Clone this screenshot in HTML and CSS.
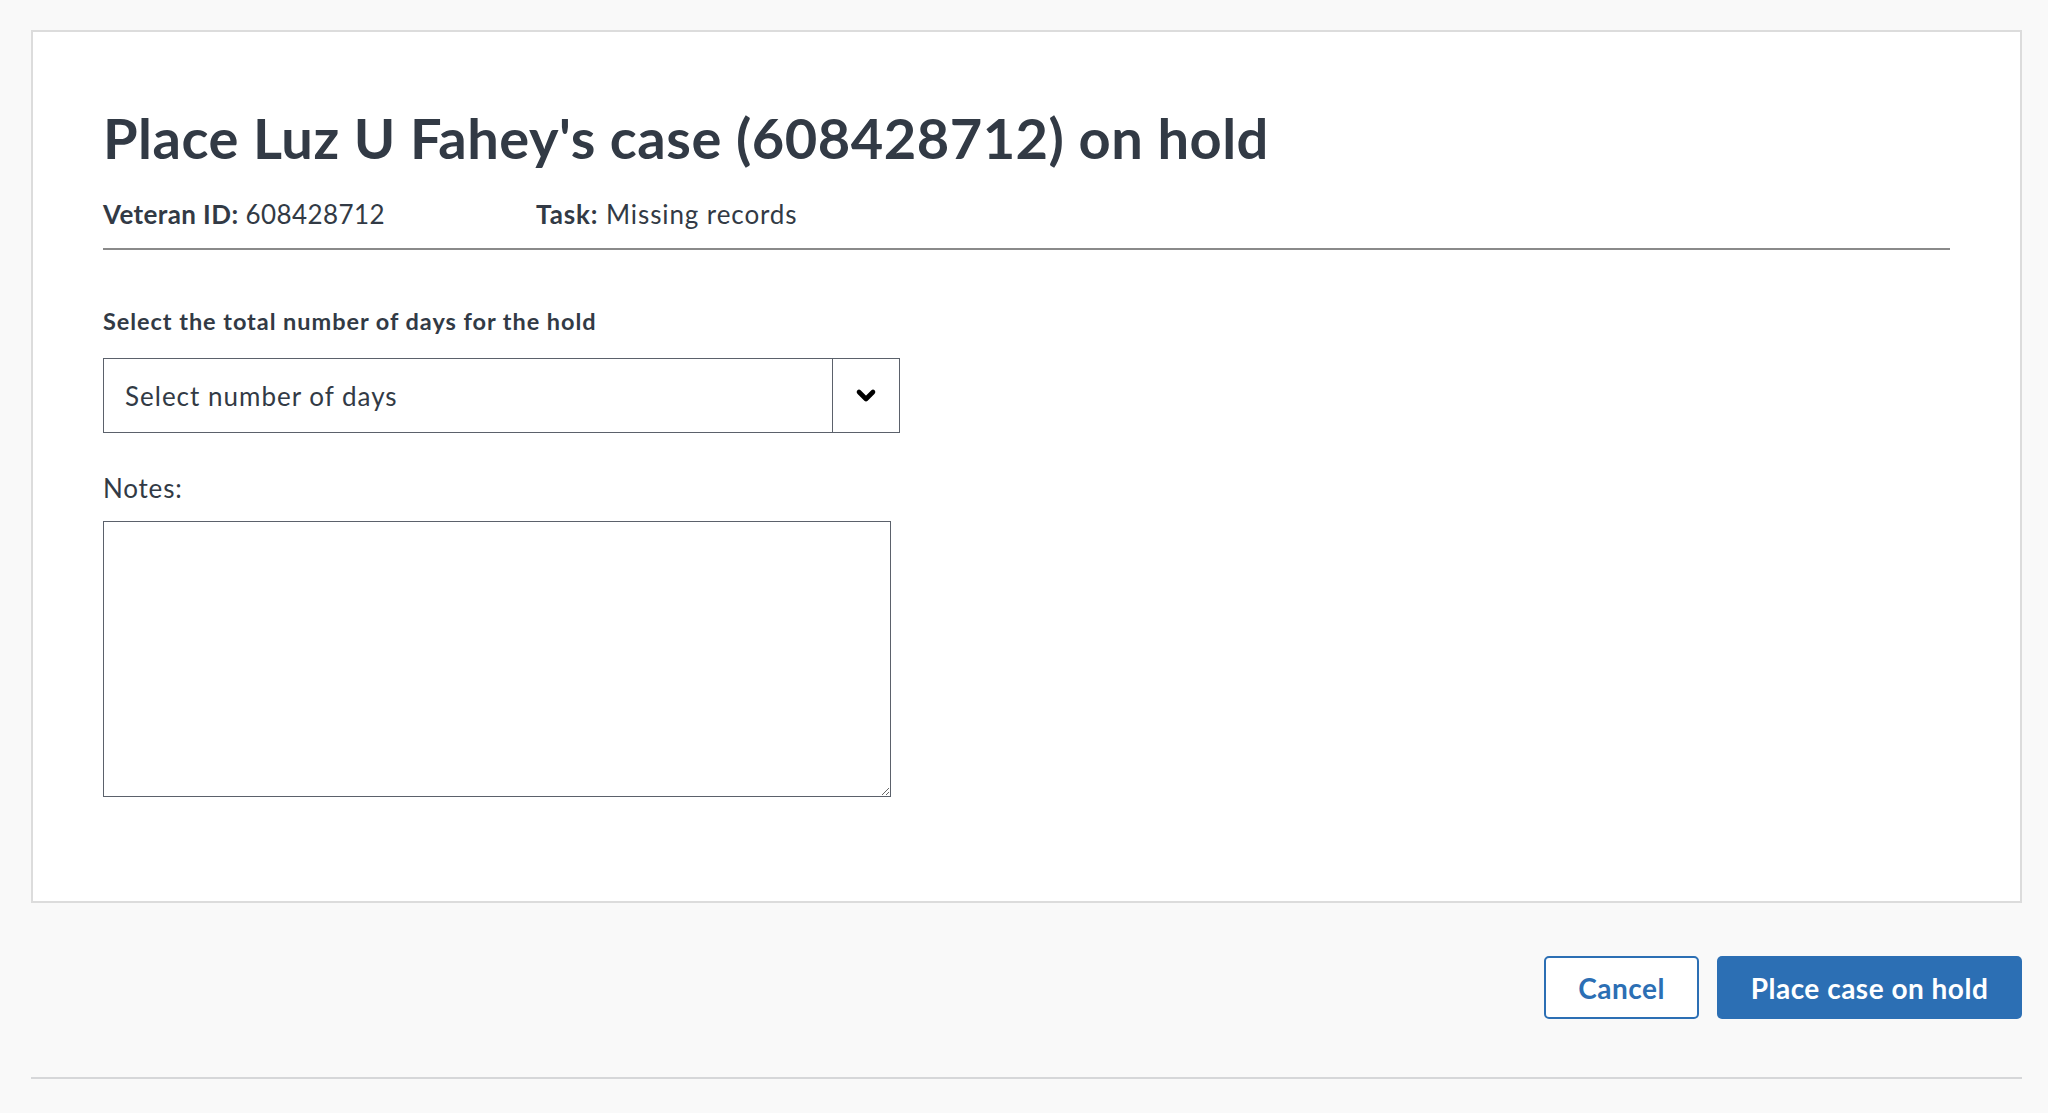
FILE: index.html
```html
<!DOCTYPE html>
<html lang="en">
<head>
<meta charset="UTF-8">
<title>Place case on hold</title>
<link rel="stylesheet" href="styles.css">
</head>
<body>

<div class="page">
  <div class="card">
    <h1>Place Luz U Fahey's case (608428712) on hold</h1>
    <div class="meta">
      <span class="meta-item"><b>Veteran ID:</b> 608428712</span>
      <span class="meta-item"><b>Task:</b> Missing records</span>
    </div>
    <hr class="rule">

    <label class="field-label" for="days">Select the total number of days for the hold</label>
    <div class="select">
      <span class="select-value" id="days">Select number of days</span>
      <span class="select-arrow">
        <svg width="22" height="15" viewBox="0 0 22 15"><polyline points="4,4 11,11 18,4" fill="none" stroke="#000" stroke-width="4.6" stroke-linecap="round" stroke-linejoin="round"/></svg>
      </span>
    </div>

    <label class="notes-label" for="notes">Notes:</label>
    <textarea id="notes" class="notes"></textarea>
  </div>

  <div class="actions">
    <button class="btn btn-secondary">Cancel</button>
    <button class="btn btn-primary">Place case on hold</button>
  </div>
  <hr class="footer-rule">
</div>

</body>
</html>
```

FILE: styles.css
```css
body, html {
  margin: 0;
  padding: 0;
  background: #f9f9f9;
  font-family: Lato, "Liberation Sans", sans-serif;
  color: #323a45;
}
.page {
  margin: 0 26px 0 31px;
  padding-top: 30px;
}
.card {
  background: #fff;
  border: 2px solid #dcdcdc;
  padding: 73px 70px 104px 70px;
}
h1 {
  margin: 0;
  font-size: 56px;
  line-height: 65px;
  font-weight: 700;
  letter-spacing: 0.5px;
}
.meta {
  margin-top: 29px;
  font-size: 26px;
  line-height: 30px;
  letter-spacing: 0.6px;
  display: flex;
}
.meta-item:first-child {
  width: 433px;
  letter-spacing: 0.4px;
}
.meta-item:last-child {
  letter-spacing: 0.9px;
}
.rule {
  margin: 19px 0 0 0;
  border: none;
  border-top: 2px solid #8a8a8a;
}
.field-label {
  display: block;
  margin-top: 58px;
  font-size: 23.5px;
  line-height: 26px;
  font-weight: 700;
  letter-spacing: 0.95px;
}
.select {
  margin-top: 24px;
  width: 795px;
  height: 73px;
  border: 1px solid #5b616b;
  display: flex;
  align-items: stretch;
}
.select-value {
  flex: 1;
  display: flex;
  align-items: center;
  padding-left: 21px;
  font-size: 26px;
  letter-spacing: 1px;
}
.select-arrow {
  width: 66px;
  border-left: 1px solid #5b616b;
  display: flex;
  align-items: center;
  justify-content: center;
}
.notes-label {
  display: block;
  margin-top: 40px;
  font-size: 26px;
  line-height: 30px;
  letter-spacing: 0.8px;
}
.notes {
  display: block;
  margin-top: 18px;
  width: 786px;
  height: 274px;
  border: 1px solid #5b616b;
  padding: 0;
  font-family: inherit;
  font-size: 25px;
}
.actions {
  display: flex;
  justify-content: flex-end;
  gap: 18px;
  margin-top: 53px;
}
.btn {
  height: 63px;
  border-radius: 5px;
  font-family: Lato, "Liberation Sans", sans-serif;
  font-size: 28px;
  font-weight: 700;
  letter-spacing: 0.5px;
  cursor: pointer;
}
.btn-secondary {
  width: 155px;
  background: #fff;
  color: #2c6fb4;
  border: 2px solid #2c6fb4;
}
.btn-primary {
  width: 305px;
  background: #2c6fb4;
  color: #fff;
  border: none;
}
.footer-rule {
  margin: 58px 0 0 0;
  border: none;
  border-top: 2px solid #d6d7d9;
}
```
